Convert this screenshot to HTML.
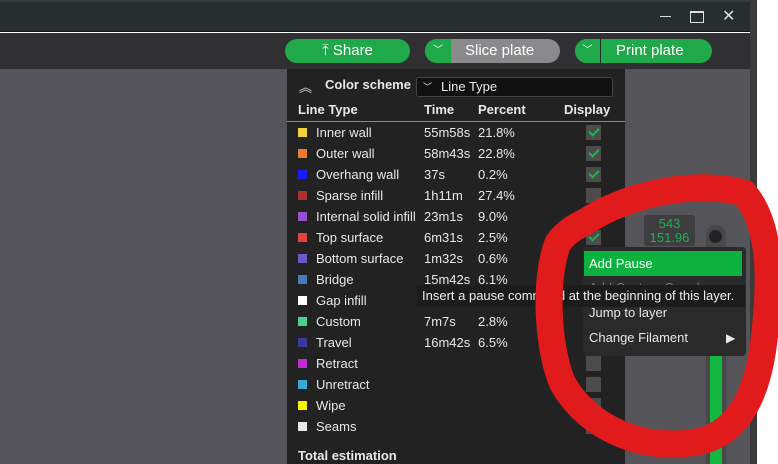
<!DOCTYPE html>
<html><head><style>
*{margin:0;padding:0;box-sizing:border-box}
body{width:778px;height:464px;overflow:hidden;background:#fff;font-family:"Liberation Sans",sans-serif;position:relative;color:#e8e8e8}
.a{position:absolute}
.row{position:absolute;left:0;height:21px;font-size:13px;line-height:21px;width:338px}
.row .sw{position:absolute;left:11px;top:6px;width:9px;height:9px}
.row .n{position:absolute;left:29px}
.row .t{position:absolute;left:137px}
.row .p{position:absolute;left:191px}
.cb{position:absolute;left:299px;top:3px;width:15px;height:15px;background:#4c4c4c}
.ck::after{content:"";position:absolute;left:3px;top:3px;width:8px;height:4px;border-left:2px solid #1fb24a;border-bottom:2px solid #1fb24a;transform:rotate(-45deg)}
.btn{position:absolute;top:39px;height:24px;border-radius:12px;background:#1fa94a;color:#fff;font-size:15px;line-height:24px;text-align:center}
</style></head><body>
<div class="a" style="left:0;top:0;width:757px;height:2px;background:#3a3a3a"></div>
<div class="a" style="left:0;top:2px;width:750px;height:30px;background:#282e30;border-bottom:1px solid #111"></div>
<div class="a" style="left:660px;top:16px;width:11px;height:1px;background:#ddd"></div>
<div class="a" style="left:690px;top:11px;width:14px;height:12px;border:1px solid #ddd;border-top-width:2px"></div>
<div class="a" style="left:722px;top:6px;font-size:16px;color:#ddd">✕</div>
<div class="a" style="left:0;top:33px;width:750px;height:36px;background:#302f31"></div>
<div class="a" style="left:0;top:69px;width:750px;height:395px;background:#55545a"></div>
<div class="a" style="left:750px;top:2px;width:7px;height:462px;background:#3a3a3c"></div>
<div class="btn" style="left:285px;width:125px">⤒ Share</div>
<div class="btn" style="left:425px;width:135px;background:#8a8a8c;text-align:left;padding-left:40px">Slice plate</div>
<div class="btn" style="left:425px;width:26px;border-radius:12px 0 0 12px;font-size:10px">﹀</div>
<div class="btn" style="left:575px;width:137px;text-align:left;padding-left:41px">Print plate</div>
<div class="a" style="left:600px;top:39px;width:1px;height:24px;background:#2b2b2b"></div>
<div class="btn" style="left:575px;width:25px;border-radius:12px 0 0 12px;font-size:10px">﹀</div>

<div class="a" style="left:625px;top:69px;width:125px;height:395px;background:#555458"></div>
<div class="a" style="left:287px;top:69px;width:338px;height:395px;background:#222222">
  <div class="a" style="left:12px;top:8px;font-size:13px;color:#ddd">︽</div>
  <div class="a" style="left:38px;top:8px;font-size:13px;font-weight:bold">Color scheme</div>
  <div class="a" style="left:129px;top:8px;width:197px;height:20px;border:1px solid #444;border-radius:3px;background:#111;font-size:13px;line-height:18px;padding-left:24px">Line Type</div>
  <div class="a" style="left:136px;top:11px;font-size:9px">﹀</div>
  <div class="a" style="left:11px;top:33px;font-size:13px;font-weight:bold">Line Type</div>
  <div class="a" style="left:137px;top:33px;font-size:13px;font-weight:bold">Time</div>
  <div class="a" style="left:191px;top:33px;font-size:13px;font-weight:bold">Percent</div>
  <div class="a" style="left:277px;top:33px;font-size:13px;font-weight:bold">Display</div>
  <div class="a" style="left:0;top:52px;width:338px;height:1px;background:#888"></div>
  <div class="row" style="top:53px"><div class="sw" style="background:#f2d23c"></div><span class="n">Inner wall</span><span class="t">55m58s</span><span class="p">21.8%</span><div class="cb ck"></div></div>
  <div class="row" style="top:74px"><div class="sw" style="background:#f07a32"></div><span class="n">Outer wall</span><span class="t">58m43s</span><span class="p">22.8%</span><div class="cb ck"></div></div>
  <div class="row" style="top:95px"><div class="sw" style="background:#1a1aff"></div><span class="n">Overhang wall</span><span class="t">37s</span><span class="p">0.2%</span><div class="cb ck"></div></div>
  <div class="row" style="top:116px"><div class="sw" style="background:#b03030"></div><span class="n">Sparse infill</span><span class="t">1h11m</span><span class="p">27.4%</span><div class="cb"></div></div>
  <div class="row" style="top:137px"><div class="sw" style="background:#9a4fd0"></div><span class="n">Internal solid infill</span><span class="t">23m1s</span><span class="p">9.0%</span><div class="cb"></div></div>
  <div class="row" style="top:158px"><div class="sw" style="background:#e8403a"></div><span class="n">Top surface</span><span class="t">6m31s</span><span class="p">2.5%</span><div class="cb ck"></div></div>
  <div class="row" style="top:179px"><div class="sw" style="background:#6a5ac8"></div><span class="n">Bottom surface</span><span class="t">1m32s</span><span class="p">0.6%</span><div class="cb"></div></div>
  <div class="row" style="top:200px"><div class="sw" style="background:#4a7ab8"></div><span class="n">Bridge</span><span class="t">15m42s</span><span class="p">6.1%</span><div class="cb"></div></div>
  <div class="row" style="top:221px"><div class="sw" style="background:#fff"></div><span class="n">Gap infill</span><span class="t">53s</span><span class="p">0.4%</span><div class="cb"></div></div>
  <div class="row" style="top:242px"><div class="sw" style="background:#4fcf8f"></div><span class="n">Custom</span><span class="t">7m7s</span><span class="p">2.8%</span><div class="cb"></div></div>
  <div class="row" style="top:263px"><div class="sw" style="background:#3a3a9a"></div><span class="n">Travel</span><span class="t">16m42s</span><span class="p">6.5%</span><div class="cb"></div></div>
  <div class="row" style="top:284px"><div class="sw" style="background:#c32ad0"></div><span class="n">Retract</span><div class="cb"></div></div>
  <div class="row" style="top:305px"><div class="sw" style="background:#3aa8d0"></div><span class="n">Unretract</span><div class="cb"></div></div>
  <div class="row" style="top:326px"><div class="sw" style="background:#f5f500"></div><span class="n">Wipe</span><div class="cb"></div></div>
  <div class="row" style="top:347px"><div class="sw" style="background:#e8e8e8"></div><span class="n">Seams</span><div class="cb ck"></div></div>
  <div class="a" style="left:11px;top:379px;font-size:13px;font-weight:bold">Total estimation</div>
</div>

<div class="a" style="left:706px;top:225px;width:20px;height:239px;background:#48484a;border-radius:10px 10px 0 0"></div>
<div class="a" style="left:710px;top:355px;width:12px;height:109px;background:#14b840"></div>
<div class="a" style="left:644px;top:215px;width:51px;height:31px;background:#3e3e40;border-radius:3px;color:#1fb24a;font-size:13px;line-height:14px;text-align:center;padding-top:2px">543<br>151.96</div>
<div class="a" style="left:709px;top:230px;width:13px;height:13px;border-radius:7px;background:#222"></div>

<div class="a" style="left:583px;top:247px;width:163px;height:109px;background:#2a2a2b;border-radius:4px"></div>
<div class="a" style="left:584px;top:251px;width:158px;height:25px;background:#0cb13e;font-size:13px;line-height:25px;padding-left:5px;color:#fff">Add Pause</div>
<div class="a" style="left:589px;top:280px;font-size:13px;color:#777">Add Custom G-code</div>
<div class="a" style="left:417px;top:285px;width:328px;height:22px;background:#1c1c1c;font-size:13px;line-height:22px;padding-left:5px;color:#eee">Insert a pause command at the beginning of this layer.</div>
<div class="a" style="left:589px;top:305px;font-size:13px;line-height:16px">Jump to layer</div>
<div class="a" style="left:589px;top:330px;font-size:13px;line-height:16px">Change Filament</div>
<div class="a" style="left:726px;top:330px;font-size:12px;line-height:16px">▶</div>

<svg class="a" style="left:0;top:0" width="778" height="464">
<path d="M585 222 C630 192 700 180 744 193 C774 228 770 290 764 340 C757 400 735 438 690 443 C630 450 582 420 562 382 C546 342 545 275 558 243 C566 232 575 227 585 222 Z" fill="none" stroke="#e11b1b" stroke-width="27" stroke-linejoin="round"/>
</svg>
</body></html>
